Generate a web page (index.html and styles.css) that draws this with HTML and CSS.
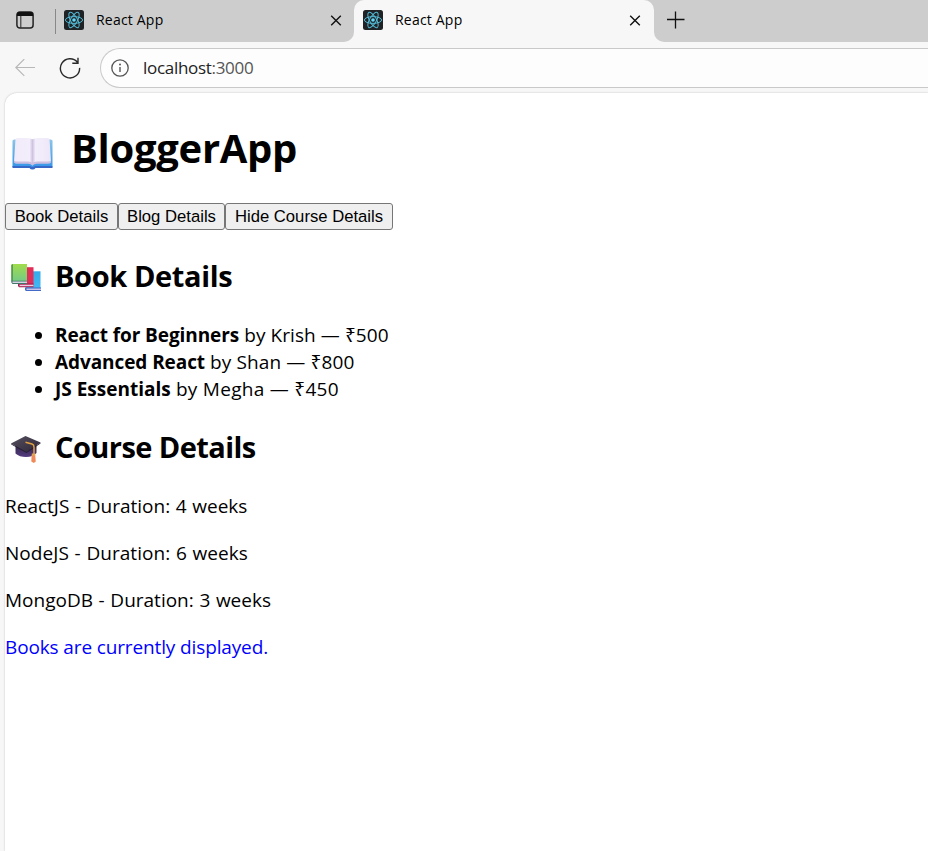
FILE: index.html
```html
<!DOCTYPE html>
<html lang="en">
<head>
<meta charset="utf-8">
<title>React App</title>
<link rel="stylesheet" href="styles.css">
</head>
<body>
<svg width="0" height="0" class="defs" aria-hidden="true">
  <defs>
    <symbol id="react" viewBox="0 0 20 20">
      <rect width="20" height="20" rx="2.5" fill="#202326"/>
      <g fill="none" stroke="#52b9d4" stroke-width="1">
        <ellipse cx="10" cy="10" rx="8.6" ry="3.4"/>
        <ellipse cx="10" cy="10" rx="8.6" ry="3.4" transform="rotate(60 10 10)"/>
        <ellipse cx="10" cy="10" rx="8.6" ry="3.4" transform="rotate(120 10 10)"/>
      </g>
      <circle cx="10" cy="10" r="1.8" fill="#61dafb"/>
    </symbol>
    <symbol id="close" viewBox="0 0 12 12">
      <path d="M1.2 1.7 10.8 11.3M10.8 1.7 1.2 11.3" stroke="#111" stroke-width="1.4" fill="none"/>
    </symbol>
    <linearGradient id="page" x1="0" x2="1"><stop offset="0" stop-color="#f1eafa"/><stop offset=".42" stop-color="#f3eefb"/><stop offset=".5" stop-color="#cfc3df"/><stop offset=".58" stop-color="#f3eefb"/><stop offset="1" stop-color="#eee6f8"/></linearGradient>
    <linearGradient id="cover" x2="0" y2="1"><stop offset="0" stop-color="#8dc5e8"/><stop offset="1" stop-color="#2f93e8"/></linearGradient>
    <linearGradient id="green" x2="0" y2="1"><stop offset="0" stop-color="#a1dc4c"/><stop offset="1" stop-color="#73c986"/></linearGradient>
    <linearGradient id="blue" x2="0" y2="1"><stop offset="0" stop-color="#35abe9"/><stop offset="1" stop-color="#44b9f5"/></linearGradient>
    <linearGradient id="cap" x2="1" y2="1"><stop offset="0" stop-color="#57505f"/><stop offset="1" stop-color="#2c2637"/></linearGradient>
    <linearGradient id="base" x2="0" y2="1"><stop offset="0" stop-color="#302641"/><stop offset="1" stop-color="#543b80"/></linearGradient>
  </defs>
</svg>
<header class="tabs">
  <svg class="workspace" viewBox="0 0 18 18"><rect x=".9" y=".9" width="16.2" height="16.2" rx="3" fill="none" stroke="#222" stroke-width="1.5"/><path d="M1 5V3.5Q1 1 3.5 1h11Q17 1 17 3.5V5z" fill="#111"/><path d="M4.8 5v12" stroke="#333" stroke-width="1.1"/></svg>
  <span class="divider"></span>
  <div class="tab idle"><svg class="favicon"><use href="#react"/></svg><span>React App</span><svg class="close"><use href="#close"/></svg></div>
  <div class="tab active"><svg class="favicon"><use href="#react"/></svg><span>React App</span><svg class="close"><use href="#close"/></svg></div>
  <div class="rest"><svg class="plus" viewBox="0 0 18 18"><path d="M8.500 .5v17M0 8.500h17.500" stroke="#111" stroke-width="1.3"/></svg></div>
</header>
<nav class="toolbar">
  <svg class="back" viewBox="0 0 20 18"><path d="M20 8.500H.8M9.300.1.8 8.500l8.500 8.400" fill="none" stroke="#b8b8b8" stroke-width="1.2"/></svg>
  <svg class="reload" viewBox="0 0 22 22"><path d="M20.600 10.900A9.600 9.600 0 1 1 18.400 5.200M19 .8v5.400h-5.700" fill="none" stroke="#292929" stroke-width="1.4"/></svg>
  <div class="address"><svg class="info" viewBox="0 0 18 18"><circle cx="9" cy="9" r="8.200" fill="none" stroke="#555" stroke-width="1.3"/><path d="M9 8v5" stroke="#555" stroke-width="1.4"/><circle cx="9" cy="5.600" r="1" fill="#555"/></svg><span>localhost<span class="port">:3000</span></span></div>
</nav>
<main class="page">
  <h1><svg class="book" viewBox="0 0 41 32"><path d="M2 2h37l1.500 1v26H23q-1 2.500-3 2.500T18 29.500H.5V3z" fill="url(#cover)"/><path d="M.5 28.500H18q2 2 5 0h17.500v2H23.500q-1 1.500-3 1.500T17.500 30.500H.5z" fill="#3768c8"/><path d="M3.500 1.500Q4 .5 7 .5h8q4 0 5.500 1.500Q22 .5 26 .5h8q3 0 3.500 1L39 24q-1 1-3 1H25q-3 0-4.500 2Q19 25 16 25H5q-2 0-3-1z" fill="url(#page)"/><path d="M2 23q1 1 3 1h11q3 0 4.500 1.500Q22 24 25 24h11q2 0 3-1v2q-1 1.300-3 1.300H25q-3 0-4.500 2-1.500-2-4.500-2H5q-2 0-3-1.300z" fill="#cbbfe0"/></svg><span>BloggerApp</span></h1>
  <div class="buttons"><button class="b1">Book Details</button><button class="b2">Blog Details</button><button class="b3">Hide Course Details</button></div>
  <h2><svg class="emoji" viewBox="0 0 30 28"><path d="M15 7.300h14.500V25.500H15z" fill="url(#blue)"/><path d="M14 23.500h16V27H15q-1.500-1-1-3.500z" fill="#426bc5"/><path d="M15.500 24.500H30v1.500H15.500z" fill="#c9c4ec"/><path d="M8 3.200h14.500V21.500H8z" fill="#e12d58"/><path d="M7 19.500h15.500v3.700H8q-1.500-1-1-3.700z" fill="#a91d4f"/><path d="M8.500 20.700h14v1.500h-14z" fill="#e9cfe1"/><path d="M.8 0H16v17.500H.3V1z" fill="url(#green)"/><path d="M.3 1 2 0v17H.3z" fill="#579b53"/><path d="M.3 16.700H16V20H1.500Q0 19 .3 16.700z" fill="#41776a"/><path d="M1.500 17.500H16V19H1.500z" fill="#d7d5e4"/></svg><span class="h-book">Book Details</span></h2>
  <ul>
    <li><b class="l1">React for Beginners</b><span class="r1"> by Krish — ₹500</span></li>
    <li><b class="l2">Advanced React</b><span class="r2"> by Shan — ₹800</span></li>
    <li><b class="l3">JS Essentials</b><span class="r3"> by Megha — ₹450</span></li>
  </ul>
  <h2><svg class="emoji" viewBox="0 0 30 28"><path d="M4.500 9v9.500q4 3.500 10.500 3.500 7 0 10.500-4V9z" fill="url(#base)"/><path d="M0 8.500 14.500 1 29.500 7.500 15.500 17z" fill="url(#cap)"/><path d="M0 8.500 15.500 17v1L.3 9.500zM15.500 17l14-9.500v1L15.500 18z" fill="#241d31"/><path d="M14.500 7.200 21 9q2 .7 2 3v8" fill="none" stroke="#e0a044" stroke-width="1.500"/><path d="M20.700 20h3.500l.6 6.500-2 1.500-2.500-1.500z" fill="#f08b59"/><path d="M20.800 18.500h3.400v2.300h-3.400z" fill="#e2a34c"/></svg><span class="h-course">Course Details</span></h2>
  <p class="p1">ReactJS - Duration: 4 weeks</p>
  <p class="p2">NodeJS - Duration: 6 weeks</p>
  <p class="p3">MongoDB - Duration: 3 weeks</p>
  <p class="status">Books are currently displayed.</p>
</main>
</body>
</html>
```
FILE: styles.css
```css
* { box-sizing: border-box; }
body { margin: 0; height: 851px; overflow: hidden; background: #f7f7f7; color: #000; font-family: "Open Sans", "Noto Sans", sans-serif; display: flex; flex-direction: column; }
svg { display: block; flex: none; }
.defs { position: absolute; }
.tabs { height: 42px; flex: none; display: flex; font-size: 14px; background: linear-gradient(#cdcdcd, #cdcdcd) 0 0 / 300px 42px no-repeat, linear-gradient(#cdcdcd, #cdcdcd) 0 0 / 100% 20px no-repeat, #f7f7f7; }
.workspace { width: 18px; height: 18px; margin: 11px 0 0 16px; }
.divider { width: 1px; height: 25px; margin: 9px 0 0 21px; background: #888; }
.tab { display: flex; align-items: center; height: 42px; padding: 0 12px 2px 8px; }
.tab span { margin-left: 12px; padding-bottom: 2px; letter-spacing: .2px; }
.idle { width: 298px; background: #cdcdcd; border-bottom-right-radius: 10px; }
.active { width: 300px; padding-left: 9px; padding-right: 13px; background: #f7f7f7; border-top-left-radius: 10px; border-top-right-radius: 10px; }
.favicon { width: 20px; height: 20px; }
.close { width: 12px; height: 12px; margin-left: auto; }
.rest { flex: 1; background: #cdcdcd; border-bottom-left-radius: 10px; padding: 11px 0 0 13px; }
.plus { width: 18px; height: 18px; }
.toolbar { height: 51px; flex: none; display: flex; align-items: center; padding-left: 15px; }
.back { width: 20px; height: 18px; }
.reload { width: 22px; height: 22px; margin-left: 24px; }
.address { flex: 1; height: 40px; margin-left: 19px; border: 1px solid #c9c9c9; border-right: 0; border-radius: 20px 0 0 20px; background: #fdfdfd; display: flex; align-items: center; padding-left: 10px; font-size: 17px; letter-spacing: -.3px; color: #222; }
.info { width: 18px; height: 18px; margin-right: 14px; }
.port { color: #555; }
.page { flex: 1; margin-left: 5px; background: #fff; border-top-left-radius: 12px; box-shadow: 0 0 2px #bbb; padding-top: 30px; font-size: 19px; line-height: 27px; }
h1 { display: flex; align-items: center; height: 53px; margin: 0 0 27px; padding-left: 7px; font-size: 40px; line-height: 53px; letter-spacing: -.3px; }
h1 span { padding-bottom: 4px; }
.book { width: 41px; height: 33px; margin: 7px 18px 0 0; }
.buttons { display: flex; height: 27px; }
button { height: 27px; margin: 0; padding: 0; border: 1px solid #767676; border-radius: 3px; background: #efefef; color: #000; font: 16.67px/23px "Liberation Sans", sans-serif; white-space: nowrap; }
.b1 { width: 113px; }
.b2 { width: 107px; }
.b3 { width: 168px; }
h2 { display: flex; align-items: center; height: 40px; margin: 27px 0 25px; padding-left: 6px; font-size: 29px; line-height: 40px; }
h2 span { padding-bottom: 2px; }
.h-book { letter-spacing: -.38px; }
.h-course { letter-spacing: -.56px; }
ul + h2 { margin-top: 25px; }
.emoji { width: 30px; height: 28px; margin: 1px 14px 0 0; }
ul { margin: 0; padding-left: 50px; }
p { margin: 0 0 20px; }
li > * { display: inline-block; white-space: pre; }
.l1, .l2 { letter-spacing: -.08px; }
.r1 { letter-spacing: .08px; }
.r2 { letter-spacing: .12px; }
.r3 { letter-spacing: .28px; }
.p1, .p2, .p3 { word-spacing: .7px; }
.p2 { letter-spacing: .05px; }
.status { color: #00f; letter-spacing: -.13px; }
```
